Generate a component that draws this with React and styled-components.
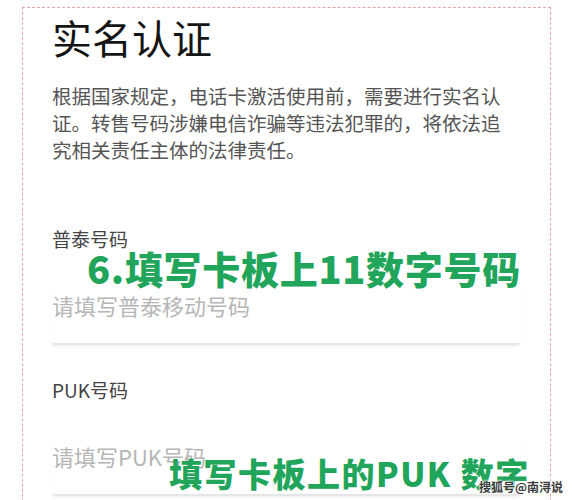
import React from "react";
import styled, { createGlobalStyle } from "styled-components";

const Global = createGlobalStyle`
  html, body { margin: 0; padding: 0; background: #ffffff; overflow: hidden; }
  body { font-family: "Noto Sans CJK SC", "Noto Sans", sans-serif; }
  * { box-sizing: border-box; }
`;

const Page = styled.div`
  position: relative;
  width: 574px;
  height: 500px;
  overflow: hidden;
  padding: 7px 0 0 22px;
`;

const Frame = styled.div`
  width: 529px;
  height: 560px;
  border: 1px dashed #e6a6a6;
  border-bottom: none;
  padding: 5px 0 0 29px;
  display: flex;
  flex-direction: column;
`;

const Title = styled.h1`
  margin: 0;
  font-size: 40px;
  line-height: 48px;
  font-weight: 400;
  color: #151515;
`;

const Intro = styled.p`
  margin: 21px 0 0;
  width: 462px;
  font-size: 19.5px;
  line-height: 27px;
  color: #555555;
`;

const Field = styled.div`
  position: relative;
  margin-top: ${(p) => p.$gap}px;
  display: flex;
  flex-direction: column;
  width: 468px;
`;

const Label = styled.label`
  font-size: 19px;
  line-height: 26px;
  color: #444444;
`;

const Input = styled.input`
  display: block;
  width: 100%;
  margin-top: 38px;
  height: 55px;
  padding: 0 0 23px;
  border: 0;
  border-bottom: 2px solid #e6e6e6;
  box-shadow: 0 2px 3px rgba(0, 0, 0, 0.05);
  border-radius: 0 0 3px 3px;
  background: transparent;
  font-family: "Noto Sans CJK SC", "Noto Sans", sans-serif;
  font-size: 22px;
  line-height: 30px;
  color: #333;
  outline: none;
  &::placeholder { color: #b6b6b6; }
`;

const Note = styled.div`
  position: absolute;
  left: ${(p) => p.$left}px;
  top: ${(p) => p.$top}px;
  white-space: nowrap;
  font-size: ${(p) => p.$size}px;
  line-height: 1;
  font-weight: 900;
  color: #20a55a;
  letter-spacing: ${(p) => p.$spacing || 0}px;
`;

const Watermark = styled.div`
  position: absolute;
  right: 11px;
  bottom: 6px;
  font-size: 12px;
  line-height: 15px;
  font-weight: 700;
  color: #3a3a3a;
  text-shadow: 0 0 2px #fff, 0 0 2px #fff, 0 0 3px #fff;
  white-space: nowrap;
`;

export default function App() {
  return (
    <>
      <Global />
      <Page>
        <Frame>
          <Title>实名认证</Title>
          <Intro>
            根据国家规定，电话卡激活使用前，需要进行实名认证。转售号码涉嫌电信诈骗等违法犯罪的，将依法追究相关责任主体的法律责任。
          </Intro>
          <Field $gap={63}>
            <Label>普泰号码</Label>
            <Input placeholder="请填写普泰移动号码" />
            <Note $left={35} $top={23} $size={38} $spacing={0.7}>
              6.填写卡板上11数字号码
            </Note>
          </Field>
          <Field $gap={32}>
            <Label>PUK号码</Label>
            <Input placeholder="请填写PUK号码" />
            <Note $left={117} $top={80} $size={33} $spacing={1.5}>
              填写卡板上的PUK 数字
            </Note>
          </Field>
        </Frame>
        <Watermark>搜狐号@南浔说</Watermark>
      </Page>
    </>
  );
}
